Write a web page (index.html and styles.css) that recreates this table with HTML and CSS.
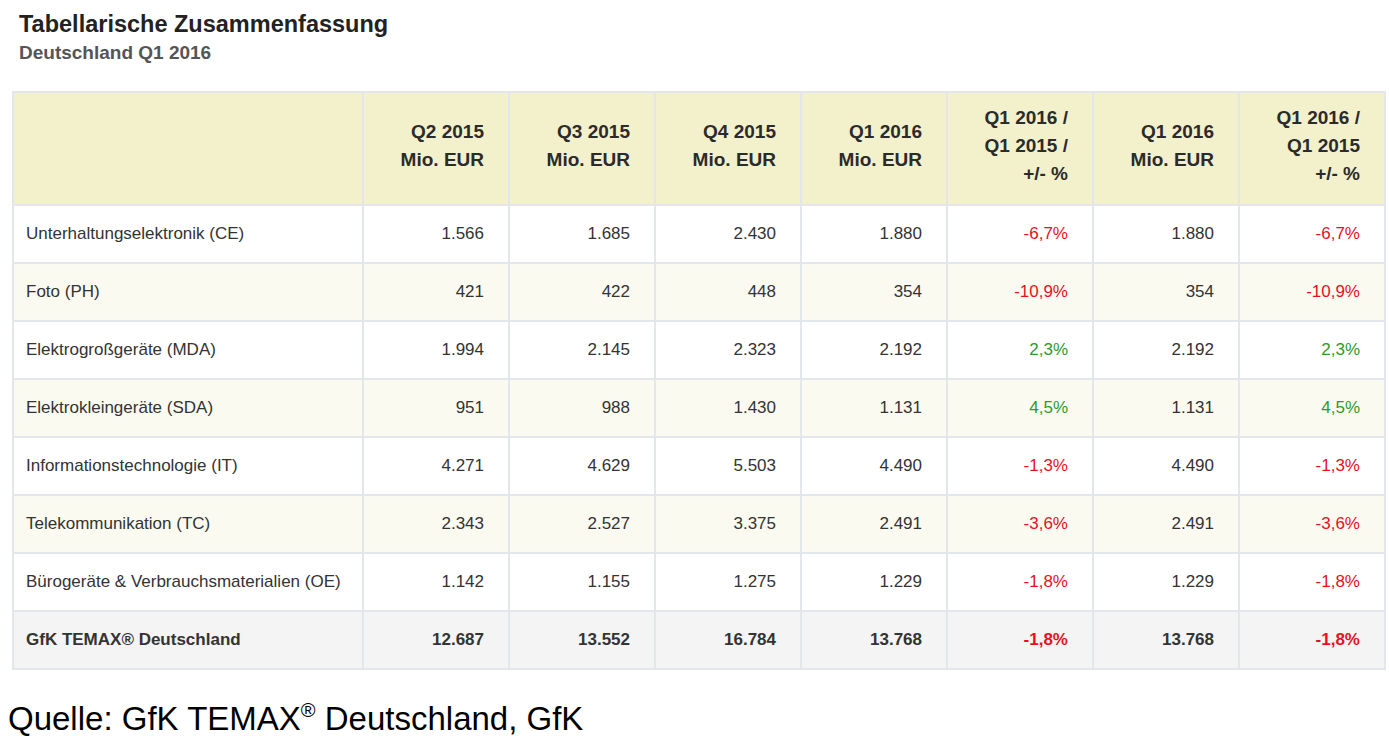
FILE: index.html
```html
<!DOCTYPE html>
<html lang="de">
<head>
<meta charset="utf-8">
<title>Tabellarische Zusammenfassung</title>
<link rel="stylesheet" href="styles.css">
</head>
<body>
<div class="page">
  <h1 class="title">Tabellarische Zusammenfassung</h1>
  <h2 class="subtitle">Deutschland Q1 2016</h2>
  <table class="summary">
    <colgroup>
      <col class="c-label">
      <col class="c-num"><col class="c-num"><col class="c-num"><col class="c-num">
      <col class="c-num"><col class="c-num"><col class="c-num">
    </colgroup>
    <thead>
      <tr>
        <th></th>
        <th>Q2 2015<br>Mio. EUR</th>
        <th>Q3 2015<br>Mio. EUR</th>
        <th>Q4 2015<br>Mio. EUR</th>
        <th>Q1 2016<br>Mio. EUR</th>
        <th>Q1 2016 /<br>Q1 2015 /<br>+/- %</th>
        <th>Q1 2016<br>Mio. EUR</th>
        <th>Q1 2016 /<br>Q1 2015<br>+/- %</th>
      </tr>
    </thead>
    <tbody>
      <tr><td>Unterhaltungselektronik (CE)</td><td>1.566</td><td>1.685</td><td>2.430</td><td>1.880</td><td class="neg">-6,7%</td><td>1.880</td><td class="neg">-6,7%</td></tr>
      <tr><td>Foto (PH)</td><td>421</td><td>422</td><td>448</td><td>354</td><td class="neg">-10,9%</td><td>354</td><td class="neg">-10,9%</td></tr>
      <tr><td>Elektrogroßgeräte (MDA)</td><td>1.994</td><td>2.145</td><td>2.323</td><td>2.192</td><td class="pos">2,3%</td><td>2.192</td><td class="pos">2,3%</td></tr>
      <tr><td>Elektrokleingeräte (SDA)</td><td>951</td><td>988</td><td>1.430</td><td>1.131</td><td class="pos">4,5%</td><td>1.131</td><td class="pos">4,5%</td></tr>
      <tr><td>Informationstechnologie (IT)</td><td>4.271</td><td>4.629</td><td>5.503</td><td>4.490</td><td class="neg">-1,3%</td><td>4.490</td><td class="neg">-1,3%</td></tr>
      <tr><td>Telekommunikation (TC)</td><td>2.343</td><td>2.527</td><td>3.375</td><td>2.491</td><td class="neg">-3,6%</td><td>2.491</td><td class="neg">-3,6%</td></tr>
      <tr><td>Bürogeräte &amp; Verbrauchsmaterialien (OE)</td><td>1.142</td><td>1.155</td><td>1.275</td><td>1.229</td><td class="neg">-1,8%</td><td>1.229</td><td class="neg">-1,8%</td></tr>
      <tr class="total"><td>GfK TEMAX® Deutschland</td><td>12.687</td><td>13.552</td><td>16.784</td><td>13.768</td><td class="neg">-1,8%</td><td>13.768</td><td class="neg">-1,8%</td></tr>
    </tbody>
  </table>
  <p class="source">Quelle: GfK TEMAX<sup>®</sup> Deutschland, GfK</p>
</div>
</body>
</html>
```
FILE: styles.css
```css
html, body {
  margin: 0;
  padding: 0;
  background: #ffffff;
}

.page {
  padding: 10px 0 0 12px;
  font-family: "Liberation Sans", Arial, sans-serif;
}

.title {
  margin: 0 0 0 7px;
  font-size: 23.5px;
  line-height: 28px;
  font-weight: bold;
  color: #222222;
}

.subtitle {
  margin: 3px 0 0 7px;
  font-size: 19px;
  line-height: 24px;
  font-weight: bold;
  color: #555555;
}

.summary {
  margin-top: 26px;
  width: 1373px;
  table-layout: fixed;
  border-collapse: collapse;
  font-size: 17px;
  color: #333333;
}

.c-label { width: 350px; }
.c-num { width: 146px; }

.summary th,
.summary td {
  border: 2px solid #e3e6ea;
  padding: 0 24px 0 12px;
  text-align: right;
  vertical-align: middle;
  white-space: nowrap;
}

.summary th {
  height: 105px;
  padding-bottom: 6px;
  background: #f3f0cc;
  font-size: 19px;
  line-height: 28px;
  font-weight: bold;
  color: #2b2b2b;
}

.summary td {
  height: 56px;
  line-height: 20px;
}

.summary td:first-child {
  text-align: left;
  padding-right: 4px;
}

.summary tbody tr:nth-child(even) td {
  background: #fbfaf0;
}

.summary tbody tr.total td {
  background: #f4f4f4;
  font-weight: bold;
}

.neg { color: #e8101e; }
.pos { color: #2e9a2a; }

.source {
  margin: 29px 0 0 -4px;
  font-size: 33px;
  line-height: 40px;
  color: #000000;
}

.source sup {
  font-size: 20px;
  line-height: 0;
  vertical-align: 13px;
}
```
